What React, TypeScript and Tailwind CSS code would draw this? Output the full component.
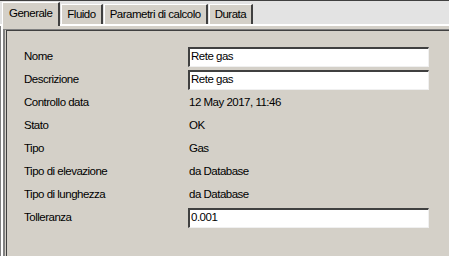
const rows: { label: string; value: string; input?: boolean }[] = [
  { label: 'Nome', value: 'Rete gas', input: true },
  { label: 'Descrizione', value: 'Rete gas', input: true },
  { label: 'Controllo data', value: '12 May 2017, 11:46' },
  { label: 'Stato', value: 'OK' },
  { label: 'Tipo', value: 'Gas' },
  { label: 'Tipo di elevazione', value: 'da Database' },
  { label: 'Tipo di lunghezza', value: 'da Database' },
  { label: 'Tolleranza', value: '0.001', input: true },
];

const tabs = ['Generale', 'Fluido', 'Parametri di calcolo', 'Durata'];

function Tab({ label, active }: { label: string; active?: boolean }) {
  if (active) {
    return (
      <div className="relative z-10 -mb-[2px] flex h-[24px] items-center border-l border-t border-white border-r-2 border-r-[#404040] bg-[#d4d0c8] px-[6px] pb-[2px] text-black">
        {label}
      </div>
    );
  }
  return (
    <div className="mt-[3px] flex h-[20px] items-center border-l border-t border-white border-r-2 border-r-[#404040] bg-[#d4d0c8] px-[5px] text-black">
      {label}
    </div>
  );
}

export default function App() {
  return (
    <div
      className="flex h-[256px] w-[449px] flex-col overflow-hidden border-t border-[#404040] bg-[#e3e3e3] text-[11.5px] tracking-[-0.5px]"
      style={{ fontFamily: '"Liberation Sans", Arial, sans-serif' }}
    >
      <div className="flex h-[23px] items-end gap-[1px] pl-[2px]">
        {tabs.map((t, i) => (
          <Tab key={t} label={t} active={i === 0} />
        ))}
      </div>
      <div className="flex flex-1 flex-col border-t-2 border-t-white bg-[#d4d0c8]">
        <div className="flex flex-1 border-l border-[#808080]">
          <div className="flex flex-1 border-l-2 border-white">
            <div className="mt-[3px] flex flex-1 border-l-2 border-t border-[#808080] pl-[1px]">
              <div className="flex flex-1 flex-col border-l border-t border-[#404040] pl-[17px] pt-[14px]">
                {rows.map((r) => (
                  <div key={r.label} className="flex h-[23px] items-center text-black">
                    <div className="w-[164px]">{r.label}</div>
                    {r.input ? (
                      <div className="flex h-[20px] w-[241px] items-center border-l-2 border-t-2 border-[#404040] border-b border-r border-b-[#f0f0f0] border-r-[#f0f0f0] bg-white pl-[1px]">
                        {r.value}
                      </div>
                    ) : (
                      <div className="pl-[1px]">{r.value}</div>
                    )}
                  </div>
                ))}
              </div>
            </div>
          </div>
        </div>
      </div>
    </div>
  );
}
